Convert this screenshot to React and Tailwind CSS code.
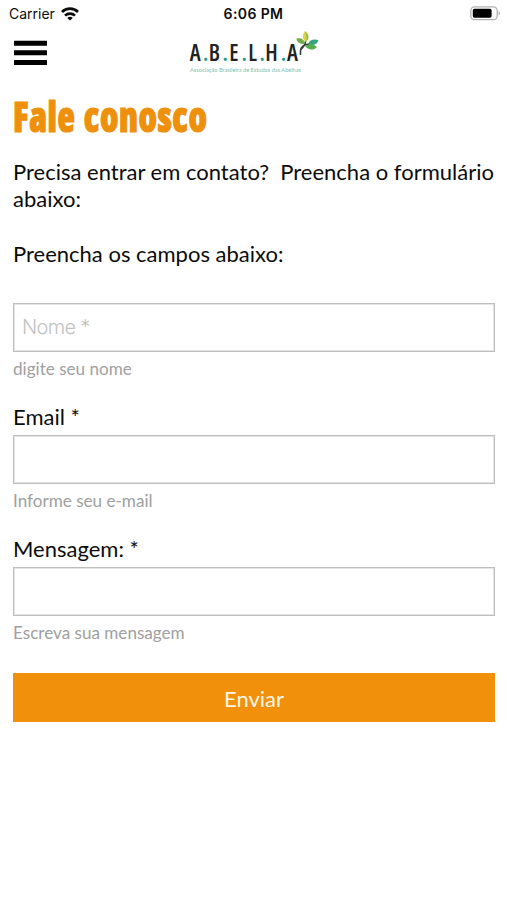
import React, { useState } from 'react';

// --- Status bar icons ---
const WifiIcon = ({ className }) => (
  <svg viewBox="0 0 18 14" fill="none" stroke="currentColor" strokeWidth="2.7" className={className}>
    <path d="M1 5a11.3 11.3 0 0 1 16 0" />
    <path d="M4 8.6a7.1 7.1 0 0 1 10 0" />
    <path d="M9 13.4 6.2 11a3.9 3.9 0 0 1 5.6 0Z" fill="currentColor" stroke="none" />
  </svg>
);

const BatteryIcon = ({ className }) => (
  <svg viewBox="0 0 31 15" className={className}>
    <rect x="0.8" y="0.8" width="26.4" height="12.9" rx="3.8" fill="none" stroke="#b2b2b2" strokeWidth="1.3" />
    <rect x="2.8" y="2.8" width="18.8" height="8.9" rx="1.6" fill="#000" />
    <path d="M28.6 5c1.8.7 1.8 3.8 0 4.5Z" fill="#a6a6a6" />
  </svg>
);

const MenuIcon = ({ className }) => (
  <svg viewBox="0 0 33 25" fill="currentColor" className={className}>
    <rect width="33" height="5" y="0.8" rx="0.5" />
    <rect width="33" height="5" y="10.3" rx="0.5" />
    <rect width="33" height="5" y="20" rx="0.5" />
  </svg>
);

const Logo = ({ className }) => (
  <svg viewBox="0 0 132 44" className={className}>
    <text
      x="1.8 15 20.7 34.6 41.2 53.6 60.2 71.6 77.3 92.7 99"
      y="30"
      fontFamily="'Open Sans', sans-serif"
      fontWeight="600"
      fontSize="22.5"
      fill="#202322"
      className="[font-stretch:86%]"
    >
      A<tspan fill="#159b86">.</tspan>B<tspan fill="#159b86">.</tspan>E<tspan fill="#159b86">.</tspan>L<tspan fill="#159b86">.</tspan>H<tspan fill="#159b86">.</tspan>A
    </text>
    <text x="2" y="41" textLength="111" lengthAdjust="spacingAndGlyphs" fontFamily="Lato, sans-serif" fontSize="5.6" fill="#7bbfb2">
      Associação Brasileira de Estudos das Abelhas
    </text>
    <path d="M112.5 24V20c0-4 4-7 9-7M112.5 19c3-3 5-6 5-9" fill="none" stroke="#34423a" strokeWidth="1.6" />
    <path d="M118 11c-4-3-4-7-1-11 4 4 4 7 1 11Z" fill="#e2d23c" />
    <path d="M118 11c1-4 0-7-1-11 4 4 5 7 1 11Z" fill="#8fc04a" />
    <path d="M116.5 13c-5 0-8-2-8-5.5 5-1 8 1 8 5.5Z" fill="#72b045" />
    <path d="M120 13c2-5 6-5 10.5-4-1 4-6 7-10.5 4Z" fill="#35a57e" />
    <path d="M117 15c5-3 9-2 12 1-4 4-9 3-12-1Z" fill="#57ad4d" />
  </svg>
);

const fields = [
  { name: 'nome', placeholder: 'Nome *', hint: 'digite seu nome' },
  { name: 'email', label: 'Email *', hint: 'Informe seu e-mail' },
  { name: 'mensagem', label: 'Mensagem: *', hint: 'Escreva sua mensagem' },
];

const Field = ({ field, value, onChange }) => (
  <div className="flex flex-col">
    {field.label && (
      <label htmlFor={field.name} className="h-[31px] text-[22px] leading-[26px]">
        {field.label}
      </label>
    )}
    <input
      id={field.name}
      name={field.name}
      value={value}
      placeholder={field.placeholder}
      onChange={onChange}
      className="h-[49px] w-full border border-[#bebebe] px-[8px] pb-[2px] font-[Inter,sans-serif] text-[20px] font-light tracking-[-0.7px] shadow-[inset_0_0_0_1px_#e4e4e4] placeholder:text-[#c2c2c2] focus:outline-none"
    />
    <p className="mt-[6px] text-[17.1px] leading-[22px] text-[#a0a0a0]">{field.hint}</p>
  </div>
);

const App = () => {
  const [values, setValues] = useState({ nome: '', email: '', mensagem: '' });

  const handleChange = (e) => {
    setValues({ ...values, [e.target.name]: e.target.value });
  };

  return (
    <div className="min-h-screen bg-white font-[Lato,sans-serif] text-[#0c0c0c]">
      {/* Status bar */}
      <div className="grid h-[27px] grid-cols-3 items-center pl-[9px] pr-[6px] font-[Inter,sans-serif] text-[14px]">
        <div className="flex items-center gap-[6px]">
          <span>Carrier</span>
          <WifiIcon className="h-[14px] w-[18px]" />
        </div>
        <span className="-ml-[3px] text-center font-semibold tracking-[0.4px]">6:06 PM</span>
        <BatteryIcon className="h-[15px] w-[31px] justify-self-end" />
      </div>

      {/* Header */}
      <header className="grid h-[53px] grid-cols-[1fr_132px_1fr] px-[14px]">
        <button type="button" aria-label="Menu" className="mt-[13px] h-[25px] w-[33px] text-black">
          <MenuIcon className="h-[25px] w-[33px]" />
        </button>
        <Logo className="mt-[4px] h-[44px] w-[132px]" />
      </header>

      <main className="pl-[13px] pr-[12px] pt-[12px]">
        <h1 className="h-[48px] w-fit origin-left scale-x-[0.835] whitespace-nowrap font-['Open_Sans',sans-serif] text-[43px] font-extrabold leading-[48px] tracking-[0.015em] [-webkit-text-stroke:1.2px_#ee900b] [font-stretch:75%] [word-spacing:2px] text-[#ee900b]">
          Fale conosco
        </h1>
        <p className="mt-[18px] whitespace-pre-wrap text-[22px] leading-[27px]">
          {'Precisa entrar em contato?  Preencha o formulário abaixo:'}
        </p>
        <p className="mt-[28px] text-[22px] leading-[27px]">Preencha os campos abaixo:</p>

        <form onSubmit={(e) => e.preventDefault()} className="mt-[36px] flex flex-col gap-[24px]">
          {fields.map((field) => (
            <Field key={field.name} field={field} value={values[field.name]} onChange={handleChange} />
          ))}
          <button type="submit" className="mt-[5px] h-[49px] w-full bg-[#f0900b] pt-[1px] text-[22px] text-[#fff6e6]">
            Enviar
          </button>
        </form>
      </main>
    </div>
  );
};

export default App;
